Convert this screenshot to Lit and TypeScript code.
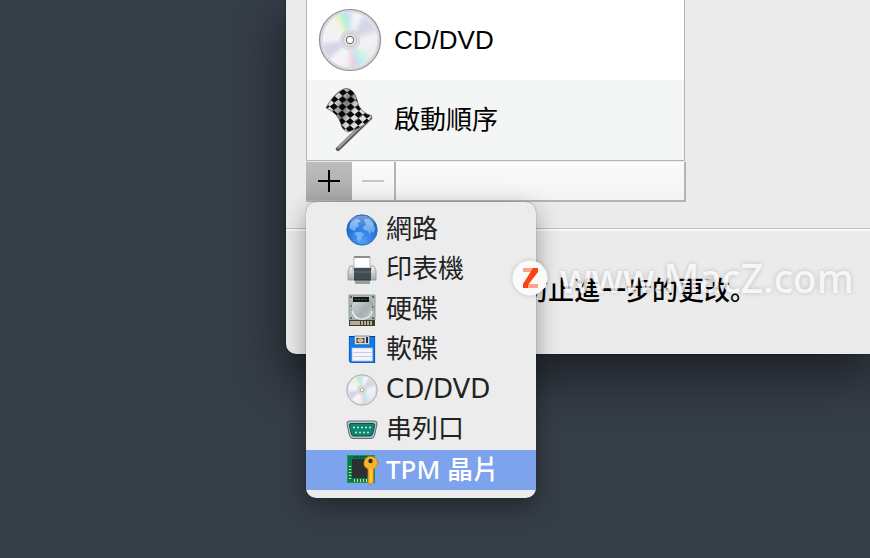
import { LitElement, html, css, svg } from "lit";
import { customElement, state } from "lit/decorators.js";

const disc = html`<svg viewBox="0 0 64 64" aria-hidden="true">
  <defs>
    <linearGradient id="base" x1="0" y1="0" x2="1" y2="1">
      <stop offset="0" stop-color="#ededf1" /><stop offset=".5" stop-color="#f7f7fa" /><stop offset="1" stop-color="#e6e6ee" />
    </linearGradient>
    <filter id="soft" x="-20%" y="-20%" width="140%" height="140%"><feGaussianBlur stdDeviation="2.4" /></filter>
    <clipPath id="round"><circle cx="32" cy="32" r="27.5" /></clipPath>
  </defs>
  <circle cx="32" cy="32" r="30.5" fill="#dadadd" stroke="#8e8e94" stroke-width="1.2" />
  <circle cx="32" cy="32" r="27.5" fill="url(#base)" />
  <g clip-path="url(#round)"><g filter="url(#soft)">
    <path d="M32 32L14 10L21 4Z" fill="#f6f3c8" />
    <path d="M32 32L20 4L27 2Z" fill="#a5f0d4" />
    <path d="M32 32L27 2L34 2Z" fill="#c4e4f8" />
    <path d="M32 32L46 6L62 22Z" fill="#d6d6e6" />
    <path d="M32 32L2 36L8 54Z" fill="#d3d3e8" />
    <path d="M32 32L32 62L39 61Z" fill="#fac6d3" />
    <path d="M32 32L39 61L46 57Z" fill="#b9e6f8" />
    <path d="M32 32L46 57L55 52Z" fill="#d0f2de" />
  </g></g>
  <circle cx="32" cy="32" r="10.5" fill="#d8d8dc" fill-opacity=".85" />
  <circle cx="32" cy="32" r="6.5" fill="#e6e6e9" stroke="#c2c2c6" />
  <circle cx="32" cy="32" r="3.6" fill="#fff" stroke="#77777c" stroke-width="1.2" />
</svg>`;

const flag = html`<svg viewBox="0 0 64 64" aria-hidden="true">
  <defs>
    <pattern id="check" width="11" height="11" patternUnits="userSpaceOnUse" patternTransform="rotate(43) skewX(-8)">
      <rect width="11" height="11" fill="#dedede" />
      <rect width="5.5" height="5.5" fill="#080808" /><rect x="5.5" y="5.5" width="5.5" height="5.5" fill="#080808" />
    </pattern>
    <linearGradient id="fold" x1="0" y1="0" x2="1" y2=".5">
      <stop offset=".25" stop-color="#000" stop-opacity="0" /><stop offset=".5" stop-color="#000" stop-opacity=".45" /><stop offset=".7" stop-color="#000" stop-opacity="0" />
    </linearGradient>
  </defs>
  <path d="M52 30L20 61" stroke="#5e5e5e" stroke-width="4.4" stroke-linecap="round" />
  <path d="M51 30L20 60" stroke="#a2a2a2" stroke-width="1.8" />
  <path d="M8 20Q16 4 28 0Q37 2 39 12Q41 24 54 28Q50 38 30 44Q24 42 23 36Q20 25 8 20Z" fill="url(#check)" stroke="#666" stroke-width=".8" />
  <path d="M8 20Q16 4 28 0Q37 2 39 12Q41 24 54 28Q50 38 30 44Q24 42 23 36Q20 25 8 20Z" fill="url(#fold)" />
</svg>`;

const globe = html`<svg viewBox="0 0 32 32" aria-hidden="true">
  <defs>
    <radialGradient id="sea" cx=".5" cy=".85" r=".85"><stop offset="0" stop-color="#4da0fb" /><stop offset=".6" stop-color="#2371dc" /><stop offset="1" stop-color="#1d5db9" /></radialGradient>
    <linearGradient id="shine" x2="0" y2="1"><stop offset="0" stop-color="#fff" stop-opacity=".4" /><stop offset="1" stop-color="#fff" stop-opacity="0" /></linearGradient>
  </defs>
  <circle cx="16" cy="16" r="15.2" fill="url(#sea)" stroke="#2a61ae" stroke-width=".8" />
  <path d="M4 10Q7 5 12 5L15 7L12 9L13 12L10 14L9 17L6 16L3 14ZM10 18L15 18L18 20L16 23L14 28L11 26L11 22L8 20ZM18 5L23 5L27 9L29 14L28 19L25 17L24 21L22 17L18 16L17 13L20 11Z" fill="#7fbcf3" opacity=".8" />
  <ellipse cx="16" cy="9" rx="12" ry="7.5" fill="url(#shine)" />
</svg>`;

const printer = html`<svg viewBox="0 0 32 32" aria-hidden="true">
  <defs><linearGradient id="body" x2="0" y2="1"><stop offset="0" stop-color="#f2f6f8" /><stop offset="1" stop-color="#9faab0" /></linearGradient></defs>
  <path d="M4 12H7V16H25V12H28L30 17V26H2V17Z" fill="url(#body)" stroke="#8b9498" stroke-width=".8" />
  <path d="M8 3H24V14H8Z" fill="#fff" stroke="#aaa" stroke-width=".8" /><path d="M8 3H24" stroke="#444" />
  <rect x="8" y="14" width="17" height="12" fill="#424b50" /><path d="M8 18H25" stroke="#697378" />
  <path d="M9 26H24V30H9Z" fill="#9a9fa1" /><path d="M8 26H25" stroke="#303638" />
</svg>`;

const hardDisk = html`<svg viewBox="0 0 32 32" aria-hidden="true">
  <defs><linearGradient id="metal" x2="1" y2="1"><stop offset="0" stop-color="#dce2e2" /><stop offset=".6" stop-color="#a6b0b0" /><stop offset="1" stop-color="#c4cdcd" /></linearGradient></defs>
  <path d="M3 1H29V26H3Z" fill="#b0bab9" stroke="#7a8585" stroke-width=".7" />
  <circle cx="16" cy="14" r="11" fill="url(#metal)" stroke="#8b9696" stroke-width=".8" />
  <path d="M6 17Q9 26 18 25Q25 23 26 17" fill="none" stroke="#eef3f3" stroke-width="1.4" />
  <rect x="7" y="3" width="16" height="5" fill="#15191b" /><path d="M9 5.5H20" stroke="#5b6163" stroke-width=".8" stroke-dasharray="2 1" />
  <path d="M3 26H29V32H3Z" fill="#3f392f" /><path d="M4 27H14V31H4Z" fill="#b9a990" />
  <path d="M16 27V31M19 27V31M22 27V31M25 27V31" stroke="#e4dfcf" stroke-width="1.4" />
  <g fill="#485050"><circle cx="5" cy="3" r="1" /><circle cx="27" cy="3" r="1" /><circle cx="5" cy="12" r=".8" /><circle cx="27" cy="13" r=".8" /><circle cx="5" cy="24" r="1" /><circle cx="27" cy="24" r="1" /></g>
</svg>`;

const floppy = html`<svg viewBox="0 0 32 32" aria-hidden="true">
  <path d="M3.5 2.5H28.5V28.5H5L3.5 27Z" fill="#0a7ced" stroke="#063da8" stroke-width="1.2" />
  <path d="M4 3V28H28V3" fill="none" stroke="#1684ef" />
  <rect x="8.5" y="2" width="15" height="8.5" fill="#d7dbdf" stroke="#737d88" stroke-width=".8" />
  <rect x="10.5" y="4" width="8" height="5" fill="#463d34" /><ellipse cx="14.5" cy="6.5" rx="2.8" ry="1.8" fill="#d9b064" stroke="#fff" stroke-width=".6" />
  <rect x="20" y="3" width="2" height="6" fill="#26333e" />
  <rect x="6" y="14" width="20.5" height="13" fill="#f5f5ff" stroke="#aab8e3" stroke-width=".7" />
  <path d="M7 18.5H26M7 22.5H26" stroke="#c5c5e2" stroke-width=".9" />
</svg>`;

const port = html`<svg viewBox="0 0 32 32" aria-hidden="true">
  <path d="M3.5 7H28.5Q31.5 7 31 10L28.5 21.5Q27.8 24.5 25 24.5H7Q4.2 24.5 3.5 21.5L1 10Q.5 7 3.5 7Z" fill="#b9c2c5" stroke="#5e6b70" />
  <path d="M5 9.5H27Q29 9.5 28.6 11.5L26.5 20.5Q26 22 24 22H8Q6 22 5.5 20.5L3.4 11.5Q3 9.5 5 9.5Z" fill="#108471" stroke="#075548" />
  <g fill="#c5f3d3">${[8, 12, 16, 20, 24].map((x) => svg`<circle cx=${x} cy="13.5" r="1" />`)}${[10, 14, 18, 22].map((x) => svg`<circle cx=${x} cy="18.5" r="1" />`)}</g>
</svg>`;

const chip = html`<svg viewBox="0 0 32 32" aria-hidden="true">
  <rect x="1" y="1" width="28" height="28" fill="#08794a" /><rect x="1.5" y="1.5" width="27" height="27" fill="none" stroke="#10a35b" stroke-dasharray="4 1" />
  <rect x="6" y="5" width="19" height="19" fill="#2d3030" />
  <path d="M8 3H25M27 6V25" stroke="#055135" stroke-width="1.5" stroke-dasharray="2 1" />
  <path d="M4 12V25" stroke="#c8e75a" stroke-width="2.5" stroke-dasharray="1 2" /><path d="M8 26.5H21" stroke="#ded969" stroke-width="3" stroke-dasharray="1 2" />
  <path d="M24.5 2.5A6.5 6.5 0 0 1 27.5 15V28L25 31L22 29V15A6.5 6.5 0 0 1 24.5 2.5Z" fill="#f7b329" stroke="#c47a0a" stroke-width=".8" />
  <circle cx="24.5" cy="7" r="2.2" fill="#272b2b" /><path d="M25 15V28" stroke="#ffda71" />
</svg>`;

const devices = [
  { id: "network", label: "網路", icon: globe },
  { id: "printer", label: "印表機", icon: printer },
  { id: "disk", label: "硬碟", icon: hardDisk },
  { id: "floppy", label: "軟碟", icon: floppy },
  { id: "optical", label: "CD/DVD", icon: disc },
  { id: "serial", label: "串列口", icon: port },
  { id: "tpm", label: "TPM 晶片", icon: chip },
];

@customElement("device-menu")
export class DeviceMenu extends LitElement {
  @state() private active = "tpm";

  static styles = css`
    :host {
      display: block;
      width: 230px;
      padding: 8px 0;
      box-sizing: border-box;
      border-radius: 10px;
      background: #ececec;
      box-shadow: 0 0 1px rgba(0, 0, 0, 0.6), 0 8px 24px rgba(0, 0, 0, 0.36);
    }
    .item {
      display: flex;
      align-items: center;
      gap: 8px;
      width: 100%;
      height: 40px;
      padding: 0 0 0 40px;
      border: 0;
      background: none;
      color: #222;
      font: 26px/38px "DejaVu Sans", "Noto Sans CJK TC", sans-serif;
      text-align: left;
      white-space: nowrap;
    }
    .item span { height: 40px; }
    .active {
      background: #7da3ec;
      color: #fff;
      font-family: "Noto Sans", "Noto Sans CJK TC", sans-serif;
      font-weight: 500;
    }
    .item:focus { outline: none; }
    svg { display: block; width: 32px; height: 32px; flex: none; }
  `;

  render() {
    return html`<div role="menu">
      ${devices.map((d) => html`<button
        class="item ${d.id === this.active ? "active" : ""}"
        role="menuitem"
        @mouseenter=${() => (this.active = d.id)}
      >${d.icon}<span>${d.label}</span></button>`)}
    </div>`;
  }
}

@customElement("app-root")
export class AppRoot extends LitElement {
  static styles = css`
    :host {
      display: block;
      position: relative;
      min-height: 100vh;
      overflow: hidden;
      background: #353d47;
      color: #000;
      font-family: "Liberation Sans", "Noto Sans CJK TC", sans-serif;
      font-size: 26px;
    }
    .window {
      margin-left: 286px;
      border-radius: 0 0 0 10px;
      background: #ebebeb;
      box-shadow: 0 0 2px rgba(0, 0, 0, 0.6), 0 20px 48px 4px rgba(0, 0, 0, 0.45);
    }
    .main { padding: 0 20px 26px; border-bottom: 1px solid #bfbfbf; }
    .panel { max-width: 380px; }
    .list {
      margin: 0 1px 0 0;
      padding: 0;
      list-style: none;
      border: 1px solid #b4b4b4;
      border-top: 0;
      background: #fff;
    }
    .row {
      display: flex;
      align-items: center;
      gap: 12px;
      height: 80px;
      padding-left: 11px;
      line-height: 40px;
    }
    .row:nth-child(even) { background: #f4f5f5; }
    .row svg { width: 64px; height: 64px; flex: none; }
    .tools {
      display: flex;
      position: relative;
      height: 38px;
      margin-top: 1px;
      border: solid #b4b4b4;
      border-width: 0 2px 2px 0;
      background: linear-gradient(#fbfbfb, #f3f3f3);
    }
    .tool {
      display: grid;
      place-items: center;
      width: 44px;
      padding: 0;
      border: 0;
      background: none;
    }
    .tool svg { width: 24px; height: 24px; }
    .add { width: 46px; background: linear-gradient(#bdbdbd, #a9a9a9); }
    .remove { border-right: 2px solid #b4b4b4; }
    device-menu { position: absolute; left: 0; top: 100%; z-index: 2; margin-top: 2px; }
    .footer {
      min-height: 125px;
      box-sizing: border-box;
      border-top: 2px solid #fafafa;
      padding: 38px 20px 0 236px;
      line-height: 40px;
    }
    .note {
      margin: 0;
      font-family: "Noto Sans CJK SC", sans-serif;
      font-weight: 500;
      white-space: nowrap;
    }
    .mark {
      display: flex;
      align-items: center;
      gap: 12px;
      position: absolute;
      left: 512px;
      top: 253px;
      z-index: 3;
      color: rgba(255, 255, 255, 0.84);
      font: 500 39px/50px "Noto Sans", sans-serif;
      text-shadow: 0 0 5px rgba(0, 0, 0, 0.2);
      pointer-events: none;
    }
    .badge { width: 36px; height: 36px; filter: drop-shadow(0 0 2px rgba(0, 0, 0, 0.2)); }
  `;

  render() {
    return html`
      <main class="window">
        <section class="main">
          <div class="panel">
            <ul class="list">
              <li class="row">${disc}<span>CD/DVD</span></li>
              <li class="row">${flag}<span>啟動順序</span></li>
            </ul>
            <div class="tools">
              <button class="tool add" aria-label="加入">
                <svg viewBox="0 0 24 24"><path d="M1 12H23M12 1V23" stroke="#000" stroke-width="2" /></svg>
              </button>
              <button class="tool remove" aria-label="移除" disabled>
                <svg viewBox="0 0 24 24"><path d="M1 12H23" stroke="#c4c4c4" stroke-width="2" /></svg>
              </button>
              <device-menu></device-menu>
            </div>
          </div>
        </section>
        <footer class="footer"><p class="note">防止進一步的更改。</p></footer>
      </main>
      <div class="mark">
        <svg class="badge" viewBox="0 0 36 36" aria-hidden="true">
          <circle cx="18" cy="18" r="17.5" fill="#fafafa" />
          <path d="M11 8H26V12H11Z" fill="#ffa287" /><path d="M11 24H26V28H11Z" fill="#ffa287" />
          <path d="M21 8H26V12L16 25V28H11V24Z" fill="#fb4414" />
        </svg>
        <span>www.MacZ.com</span>
      </div>
    `;
  }
}
